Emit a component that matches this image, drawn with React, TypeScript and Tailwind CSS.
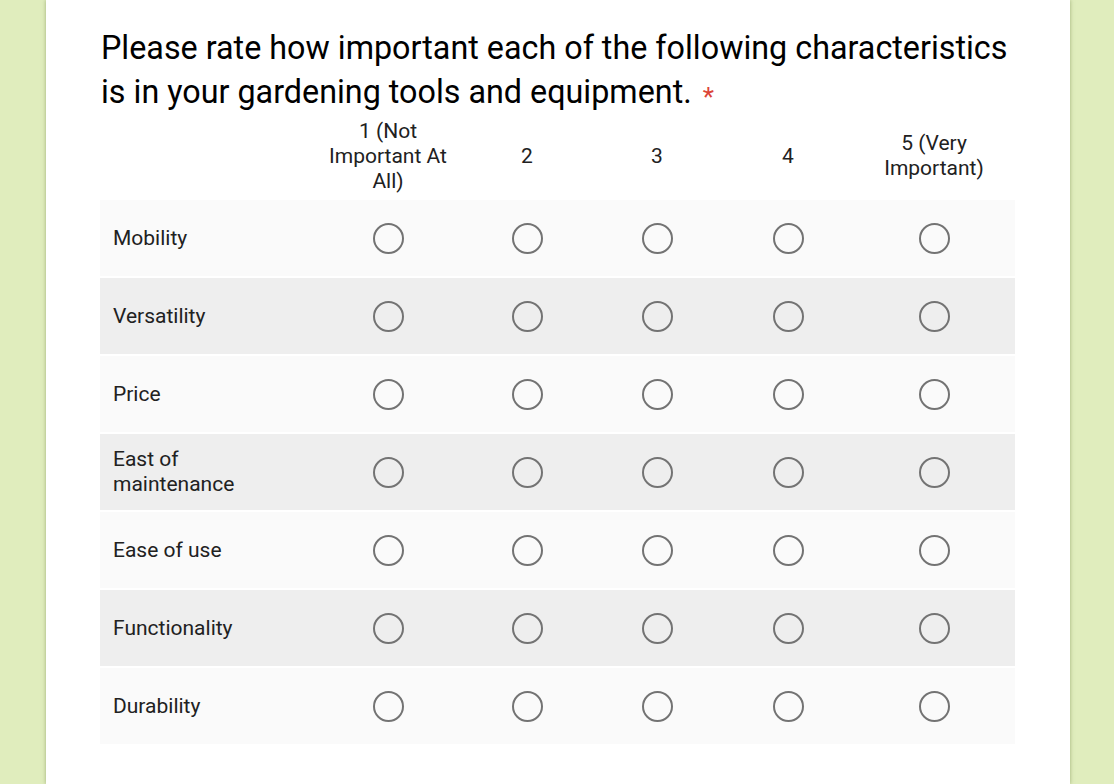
const columns = ['1 (Not Important At All)', '2', '3', '4', '5 (Very Important)']

const rows = [
  'Mobility',
  'Versatility',
  'Price',
  'East of maintenance',
  'Ease of use',
  'Functionality',
  'Durability',
]

function Radio() {
  return <div className="w-[31px] h-[31px] rounded-full border-[2.5px] border-[#737373]" />
}

export default function App() {
  return (
    <div
      className="min-h-[784px] bg-[#e0edbd] flex justify-center"
      style={{ fontFamily: 'Roboto, "Liberation Sans", sans-serif' }}
    >
      <div className="w-[1024px] ml-[2px] bg-white min-h-[784px] shadow-[0_0_4px_rgba(100,120,60,0.55)] pl-[54px] pr-[55px] pt-[26px]">
        <h1 className="text-[32.3px] leading-[44px] text-black font-normal pl-[1px]">
          Please rate how important each of the following characteristics is in your gardening
          tools and equipment.
          <span className="text-[#db4437] text-[26px] leading-none ml-[11px] relative top-[3px]">*</span>
        </h1>
        <div className="grid grid-cols-[213px_150px_128px_132px_130px_162px] gap-y-[2px] text-[21px] text-[#212121]">
          <div className="h-[84px]" />
          {columns.map((c) => (
            <div
              key={c}
              className="h-[84px] flex items-center justify-center text-center leading-[25px] px-4"
            >
              {c}
            </div>
          ))}
          {rows.map((r, i) => {
            const bg = i % 2 === 0 ? 'bg-[#fafafa]' : 'bg-[#eeeeee]'
            return [
              <div
                key={r}
                className={`h-[76px] flex items-center pl-[13px] pr-4 leading-[25px] ${bg}`}
              >
                {r}
              </div>,
              ...columns.map((c) => (
                <div key={r + c} className={`h-[76px] flex items-center justify-center ${bg}`}>
                  <Radio />
                </div>
              )),
            ]
          })}
        </div>
      </div>
    </div>
  )
}
